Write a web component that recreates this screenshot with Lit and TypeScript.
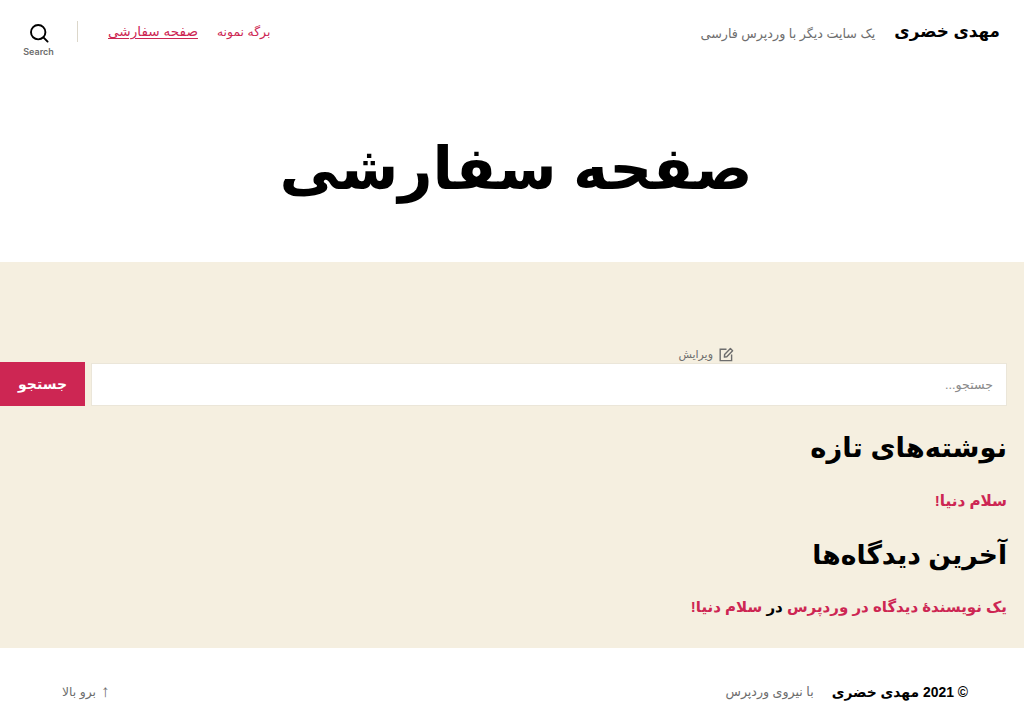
import { LitElement, html, css } from "lit";
import { customElement } from "lit/decorators.js";

@customElement("app-root")
export class AppRoot extends LitElement {
  static styles = css`
    :host {
      display: block;
      width: 1024px;
      height: 728px;
      overflow: hidden;
      background: #fff;
      color: #000;
      font-family: "Liberation Sans", "DejaVu Sans", sans-serif;
      direction: rtl;
    }
    a { color: #cd2653; text-decoration: none; }
    .header {
      height: 64px;
      display: flex;
      justify-content: space-between;
      padding: 0 24px 0 0;
    }
    .brand { display: flex; align-items: center; gap: 19px; height: 62px; }
    .site-title { font-size: 16.8px; font-weight: 700; }
    .tagline { font-size: 12.7px; color: #6d6d6d; padding-top: 4px; }
    .header-left { display: flex; align-items: flex-start; padding-top: 21px; }
    .nav { display: flex; gap: 19px; font-size: 12.4px; line-height: 22px; margin-left: 30px; }
    .nav .current { font-size: 13.6px; text-decoration: underline; text-underline-offset: 2px; text-decoration-thickness: 1px; }
    .divider { width: 1px; height: 21px; background: #dcd7ca; }
    .search-toggle {
      width: 77px;
      display: flex;
      flex-direction: column;
      align-items: center;
      margin-top: 2px;
      font-family: "Inter", "Liberation Sans", sans-serif;
      font-size: 9px;
      font-weight: 600;
      color: #6d6d6d;
      direction: ltr;
    }
    .search-toggle svg { display: block; margin-bottom: 3px; }
    .hero { height: 198px; display: flex; justify-content: center; align-items: flex-start; padding-left: 8px; }
    .hero h1 { margin: 0; padding-top: 62px; font-size: 59.6px; line-height: 86px; font-weight: 700; }
    .main { background: #f5efe0; height: 386px; display: flex; flex-direction: column; }
    .edit {
      margin-top: 84px;
      height: 16px;
      padding-right: 290px;
      display: flex;
      align-items: center;
      gap: 6px;
      font-size: 11px;
      color: #6d6d6d;
    }
    .search { display: flex; height: 44px; padding-right: 17px; }
    .search .field {
      flex: 1;
      background: #fff;
      border: 1px solid #ebe6d9;
      display: flex;
      align-items: center;
      padding-right: 13px;
      font-size: 12.6px;
      color: #8a8a8a;
      box-sizing: border-box;
      margin-top: 1px;
      height: 43px;
    }
    .search .btn {
      width: 85px;
      margin-right: 6px;
      background: #cd2653;
      color: #fff;
      font-weight: 700;
      font-size: 14px;
      display: flex;
      align-items: center;
      justify-content: center;
    }
    .widgets { padding: 0 17px; }
    .widgets h2 { margin: 0; line-height: 36px; font-weight: 700; }
    .w1 { margin-top: 24px; }
    .w1 h2 { font-size: 27.4px; }
    .w2 { margin-top: 24px; }
    .w2 h2 { font-size: 26.6px; }
    .item { font-weight: 700; line-height: 24px; }
    .w1 .item { margin-top: 23px; font-size: 15.2px; }
    .w2 .item { margin-top: 22px; font-size: 15px; }
    .footer {
      height: 80px;
      display: flex;
      justify-content: space-between;
      align-items: center;
      padding: 7px 56px 0 62px;
      box-sizing: border-box;
    }
    .credits { display: flex; gap: 18px; align-items: center; }
    .copy { font-size: 13.9px; font-weight: 700; }
    .powered { font-size: 12.6px; color: #6d6d6d; }
    .top { font-size: 12.4px; color: #6d6d6d; display: flex; gap: 5px; align-items: center; }
    .arrow { font-size: 17px; }
  `;

  render() {
    return html`
      <header class="header">
        <div class="brand">
          <div class="site-title">مهدی خضری</div>
          <div class="tagline">یک سایت دیگر با وردپرس فارسی</div>
        </div>
        <div class="header-left">
          <nav class="nav">
            <a href="#">برگه نمونه</a>
            <a href="#" class="current">صفحه سفارشی</a>
          </nav>
          <div class="divider"></div>
          <div class="search-toggle">
            <svg width="20" height="20" viewBox="0 0 20 20" fill="none" stroke="#000" stroke-width="1.9">
              <circle cx="9.2" cy="9.2" r="7.2"></circle>
              <path d="M14.4 14.4 L18.6 18.6" stroke-linecap="round"></path>
            </svg>
            <span>Search</span>
          </div>
        </div>
      </header>
      <section class="hero"><h1>صفحه سفارشی</h1></section>
      <main class="main">
        <div class="edit">
          <svg width="15" height="15" viewBox="0 0 15 15" fill="none" stroke="#6d6d6d" stroke-width="1.4">
            <path d="M7.5 2.2H1.2V13.6H12.6V7.5"></path>
            <path d="M5.6 7.6 11.4 1.6 13.6 3.8 7.8 9.8 5.4 10.1Z" stroke-linejoin="round"></path>
          </svg>
          <span>ویرایش</span>
        </div>
        <div class="search">
          <div class="field">جستجو...</div>
          <div class="btn">جستجو</div>
        </div>
        <div class="widgets">
          <div class="w1">
            <h2>نوشته‌های تازه</h2>
            <div class="item"><a href="#">سلام دنیا!</a></div>
          </div>
          <div class="w2">
            <h2>آخرین دیدگاه‌ها</h2>
            <div class="item"><a href="#">یک نویسندهٔ دیدگاه در وردپرس</a> در <a href="#">سلام دنیا!</a></div>
          </div>
        </div>
      </main>
      <footer class="footer">
        <div class="credits">
          <div class="copy">© 2021 مهدی خضری</div>
          <div class="powered">با نیروی وردپرس</div>
        </div>
        <div class="top"><span class="arrow">↑</span><span>برو بالا</span></div>
      </footer>
    `;
  }
}
